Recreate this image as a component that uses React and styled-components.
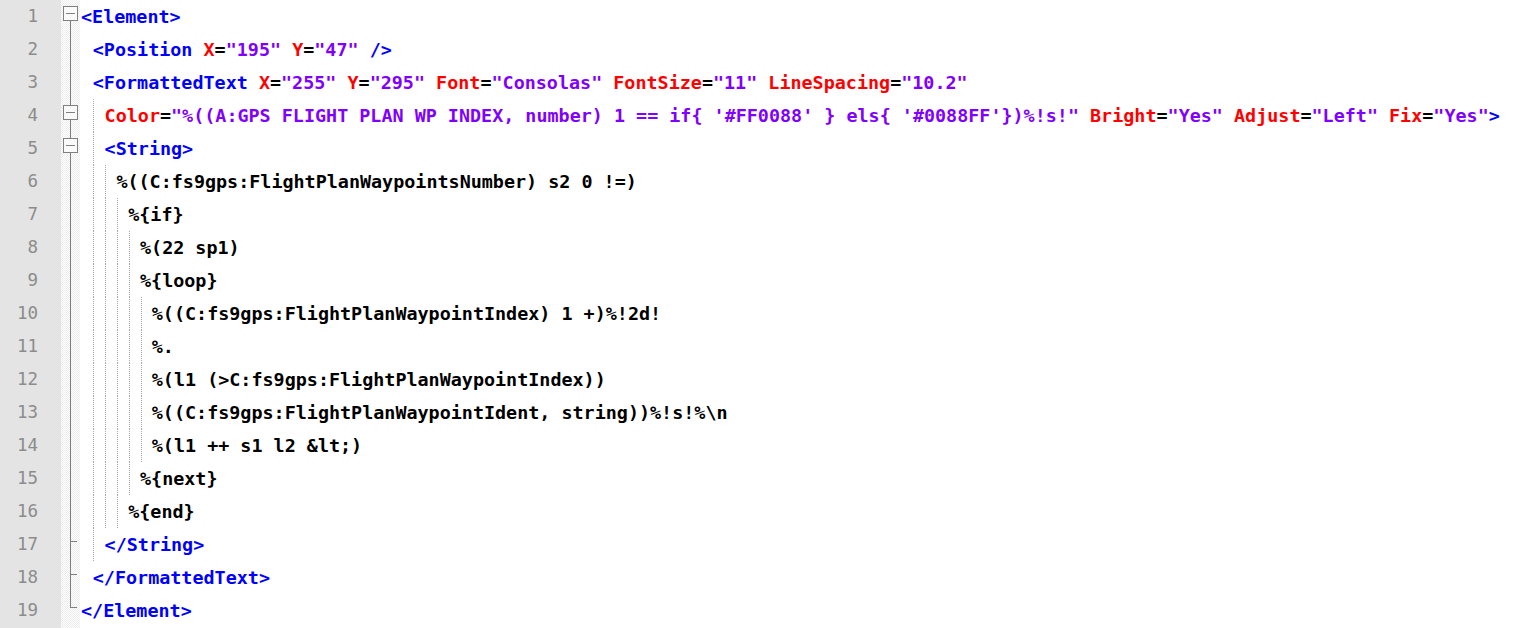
import React from "react";
import styled, { createGlobalStyle } from "styled-components";

const GlobalStyle = createGlobalStyle`
  html, body {
    margin: 0;
    padding: 0;
    background: #ffffff;
  }
  #root {
    height: 100vh;
  }
`;

const ROW = 33;
const COLORS = {
  t: "#0000ff",
  a: "#ff0000",
  e: "#000000",
  v: "#8000ff",
  x: "#000000",
};

const lines = [
  { indent: 0, fold: "head", parts: [["t", "<Element>"]] },
  {
    indent: 1,
    fold: "mid",
    parts: [
      ["t", "<Position "],
      ["a", "X"], ["e", "="], ["v", '"195"'], ["x", " "],
      ["a", "Y"], ["e", "="], ["v", '"47"'],
      ["t", " />"],
    ],
  },
  {
    indent: 1,
    fold: "mid",
    parts: [
      ["t", "<FormattedText "],
      ["a", "X"], ["e", "="], ["v", '"255"'], ["x", " "],
      ["a", "Y"], ["e", "="], ["v", '"295"'], ["x", " "],
      ["a", "Font"], ["e", "="], ["v", '"Consolas"'], ["x", " "],
      ["a", "FontSize"], ["e", "="], ["v", '"11"'], ["x", " "],
      ["a", "LineSpacing"], ["e", "="], ["v", '"10.2"'],
    ],
  },
  {
    indent: 2,
    fold: "inner",
    parts: [
      ["a", "Color"], ["e", "="],
      ["v", `"%((A:GPS FLIGHT PLAN WP INDEX, number) 1 == if{ '#FF0088' } els{ '#0088FF'})%!s!"`],
      ["x", " "],
      ["a", "Bright"], ["e", "="], ["v", '"Yes"'], ["x", " "],
      ["a", "Adjust"], ["e", "="], ["v", '"Left"'], ["x", " "],
      ["a", "Fix"], ["e", "="], ["v", '"Yes"'],
      ["t", ">"],
    ],
  },
  { indent: 2, fold: "inner", parts: [["t", "<String>"]] },
  { indent: 3, fold: "mid", parts: [["x", "%((C:fs9gps:FlightPlanWaypointsNumber) s2 0 !=)"]] },
  { indent: 4, fold: "mid", parts: [["x", "%{if}"]] },
  { indent: 5, fold: "mid", parts: [["x", "%(22 sp1)"]] },
  { indent: 5, fold: "mid", parts: [["x", "%{loop}"]] },
  { indent: 6, fold: "mid", parts: [["x", "%((C:fs9gps:FlightPlanWaypointIndex) 1 +)%!2d!"]] },
  { indent: 6, fold: "mid", parts: [["x", "%."]] },
  { indent: 6, fold: "mid", parts: [["x", "%(l1 (>C:fs9gps:FlightPlanWaypointIndex))"]] },
  { indent: 6, fold: "mid", parts: [["x", "%((C:fs9gps:FlightPlanWaypointIdent, string))%!s!%\\n"]] },
  { indent: 6, fold: "mid", parts: [["x", "%(l1 ++ s1 l2 &lt;)"]] },
  { indent: 5, fold: "mid", parts: [["x", "%{next}"]] },
  { indent: 4, fold: "mid", parts: [["x", "%{end}"]] },
  { indent: 2, fold: "tick", parts: [["t", "</String>"]] },
  { indent: 1, fold: "tick", parts: [["t", "</FormattedText>"]] },
  { indent: 0, fold: "end", parts: [["t", "</Element>"]] },
];

const Editor = styled.div`
  display: flex;
  height: 100%;
  overflow: hidden;
  background: #ffffff;
`;

const LineNumbers = styled.div`
  display: flex;
  flex-direction: column;
  width: 61px;
  flex-shrink: 0;
  background: #e4e4e4;
`;

const LineNumber = styled.div`
  height: ${ROW}px;
  line-height: ${ROW}px;
  padding-right: 23px;
  text-align: right;
  font-family: "DejaVu Sans Mono", "Liberation Mono", monospace;
  font-size: 17.5px;
  color: #8c8c8c;
`;

const FoldMargin = styled.div`
  display: flex;
  flex-direction: column;
  width: 19px;
  flex-shrink: 0;
  background-color: #ffffff;
  background-image: repeating-conic-gradient(#ececec 0 25%, #ffffff 0 50%);
  background-size: 2px 2px;
`;

const FoldCell = styled.svg`
  display: block;
  width: 19px;
  height: ${ROW}px;
`;

const Code = styled.div`
  display: flex;
  flex-direction: column;
  flex: 1;
  min-width: 0;
`;

const CodeLine = styled.div`
  position: relative;
  height: ${ROW}px;
  line-height: ${ROW}px;
  padding-left: ${({ $indent }) => 1 + $indent * 11.8}px;
  white-space: pre;
  font-family: "DejaVu Sans Mono", "Liberation Mono", monospace;
  font-weight: bold;
  font-size: 18.4px;
`;

const Token = styled.span`
  color: ${({ $kind }) => COLORS[$kind]};
`;

const Guide = styled.span`
  position: absolute;
  top: 0;
  bottom: 0;
  left: ${({ $level }) => 13 + ($level - 1) * 12}px;
  border-left: 1px dotted #a8a8a8;
`;

const STROKE = "#808080";

function FoldMarker({ type }) {
  return (
    <FoldCell viewBox={`0 0 19 ${ROW}`}>
      {type === "mid" && <line x1="9.5" y1="0" x2="9.5" y2={ROW} stroke={STROKE} />}
      {type === "tick" && (
        <>
          <line x1="9.5" y1="0" x2="9.5" y2={ROW} stroke={STROKE} />
          <line x1="9.5" y1="13.5" x2="16" y2="13.5" stroke={STROKE} />
        </>
      )}
      {type === "end" && (
        <>
          <line x1="9.5" y1="0" x2="9.5" y2="13.5" stroke={STROKE} />
          <line x1="9" y1="13.5" x2="16" y2="13.5" stroke={STROKE} />
        </>
      )}
      {(type === "head" || type === "inner") && (
        <>
          {type === "inner" && <line x1="9.5" y1="0" x2="9.5" y2="6" stroke={STROKE} />}
          <line x1="9.5" y1="20" x2="9.5" y2={ROW} stroke={STROKE} />
          <rect x="2.5" y="6.5" width="14" height="14" fill="#fafafa" stroke={STROKE} />
          <line x1="5" y1="13.5" x2="14" y2="13.5" stroke={STROKE} />
        </>
      )}
    </FoldCell>
  );
}

export default function App() {
  return (
    <>
      <GlobalStyle />
      <Editor>
        <LineNumbers>
          {lines.map((_, i) => (
            <LineNumber key={i}>{i + 1}</LineNumber>
          ))}
        </LineNumbers>
        <FoldMargin>
          {lines.map((l, i) => (
            <FoldMarker key={i} type={l.fold} />
          ))}
        </FoldMargin>
        <Code>
          {lines.map((l, i) => (
            <CodeLine key={i} $indent={l.indent}>
              {Array.from({ length: Math.max(0, l.indent - 1) }, (_, k) => (
                <Guide key={k} $level={k + 1} />
              ))}
              {l.parts.map(([kind, text], j) => (
                <Token key={j} $kind={kind}>
                  {text}
                </Token>
              ))}
            </CodeLine>
          ))}
        </Code>
      </Editor>
    </>
  );
}
